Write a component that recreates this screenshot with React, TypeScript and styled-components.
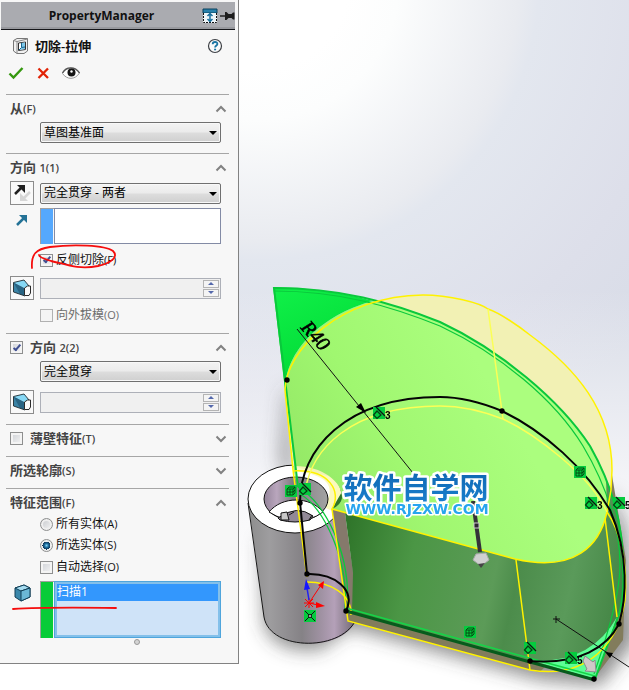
import React from "react";
import styled, { createGlobalStyle, css } from "styled-components";

const GlobalStyle = createGlobalStyle`
  *, *::before, *::after { box-sizing: border-box; }
  body {
    margin: 0;
    background: #fff;
    font-family: "Open Sans", "Noto Sans CJK SC", sans-serif;
    font-size: 12px;
    color: #111;
  }
`;

const Workspace = styled.div`
  display: flex;
  align-items: flex-start;
  min-height: 100vh;
`;

const Panel = styled.aside`
  position: relative;
  flex: 0 0 239px;
  background: #f7f7f7;
  border-right: 1px solid #828282;
  border-bottom: 1px solid #828282;
  padding: 2px 0 18px;
`;

const PanelHeader = styled.header`
  display: flex;
  align-items: center;
  height: 28px;
  margin: 0 3px 0 1px;
  background: #aaabb0;
  border-bottom: 1px solid #15161a;
  box-shadow: inset 0 -2px 0 #98999e;
`;

const PanelTitle = styled.h1`
  flex: 1;
  margin: 0;
  text-align: center;
  font-size: 12px;
  font-weight: 700;
  line-height: 20px;
`;

const PlainButton = styled.button`
  display: flex;
  padding: 0;
  border: 0;
  background: none;
`;

const FeatureRow = styled.div`
  display: flex;
  align-items: center;
  height: 32px;
  padding: 0 15px 0 12px;
  gap: 6px;
`;

const FeatureName = styled.h2`
  flex: 1;
  margin: 0;
  font-size: 13px;
  font-weight: 600;
  line-height: 20px;
`;

const ActionRow = styled.div`
  display: flex;
  align-items: center;
  height: 22px;
  margin-bottom: 10px;
  padding-left: 8px;
  gap: 12px;
`;

const Section = styled.section<{ $bottom: number }>`
  margin: 0 9px 0 6px;
  padding: 0 8px ${(p) => p.$bottom}px 4px;
  border-top: 1px solid #a6a6a6;
`;

const SectionHeader = styled.div`
  display: flex;
  align-items: center;
  height: 27px;
  gap: 7px;
  margin-right: -6px;
`;

const Latin = styled.span`
  font-size: 11px;
`;

const SectionTitle = styled.h3`
  flex: 1;
  margin: 0;
  font-size: 13px;
  font-weight: 600;
  line-height: 20px;
  color: #444;
`;

const Row = styled.div<{ $gap?: number }>`
  display: grid;
  grid-template-columns: 30px minmax(0, 1fr);
  align-items: center;
  margin-top: ${(p) => p.$gap ?? 0}px;
`;

const Field = styled.div`
  grid-column: 2;
`;

const SelectFrame = styled.div`
  position: relative;
  &::after {
    content: "";
    position: absolute;
    right: 4px;
    top: 9px;
    border: 4px solid transparent;
    border-top-color: #000;
    border-bottom: 0;
    pointer-events: none;
  }
`;

const Select = styled.select`
  display: block;
  appearance: none;
  width: 100%;
  height: 21px;
  padding: 0 16px 0 3px;
  border: 1px solid #707070;
  border-radius: 2px;
  background: linear-gradient(#f3f3f3, #ebebeb 48%, #dddddd 52%, #cfcfcf);
  box-shadow: inset 0 0 0 1px #f8f8f8;
  font: inherit;
  line-height: 18px;
  color: #000;
`;

const IconButton = styled.button`
  display: flex;
  align-items: center;
  justify-content: center;
  width: 24px;
  height: 24px;
  padding: 0;
  border: 1px solid #8c8c8c;
  background: #f9f9f9;
`;

const IconCell = styled.span`
  align-self: start;
  display: flex;
  padding: 3px 0 0 4px;
`;

const PickBox = styled.div<{ $tint: string }>`
  display: grid;
  grid-template-columns: 13px minmax(0, 1fr);
  column-gap: 1px;
  background: linear-gradient(90deg, ${(p) => p.$tint} 13px, transparent 13px);
  box-shadow: inset 1px 1px 0 #a0a0a0;
`;

const PickInput = styled.textarea`
  grid-column: 2;
  display: block;
  width: 100%;
  height: 36px;
  border: 1px solid #838ba5;
  background: #fff;
  resize: none;
  outline: none;
`;

const PickList = styled.ul`
  grid-column: 2;
  height: 57px;
  margin: 0;
  padding: 2px;
  list-style: none;
  border: 1px solid #4fa5dc;
  outline: 2px solid #84c0ea;
  outline-offset: -3px;
  background: #cfe3f8;
`;

const PickItem = styled.li`
  height: 17px;
  line-height: 15px;
  background: #3397fd;
  color: #fff;
`;

const boxStyle = css`
  appearance: none;
  flex: none;
  margin: 0;
  width: 13px;
  height: 13px;
  border: 1px solid #8e8f8f;
`;

const Check = styled.input.attrs({ type: "checkbox" })`
  ${boxStyle}
  display: grid;
  place-items: center;
  background: linear-gradient(135deg, #cdd0d5, #f6f6f6);
  box-shadow: inset 0 0 0 2px #f4f4f4;
  &:disabled { border-color: #b1b1b1; background: #f4f4f4; }
  &:checked::before {
    content: "";
    width: 4px;
    height: 8px;
    margin-bottom: 2px;
    border: solid #3f4f92;
    border-width: 0 2px 2px 0;
    transform: rotate(40deg);
  }
`;

const Radio = styled.input.attrs({ type: "radio" })`
  ${boxStyle}
  border-radius: 50%;
  background: linear-gradient(135deg, #c4c7cb, #f6f6f6);
  box-shadow: inset 0 0 0 2px #efefef;
  &:checked {
    background: radial-gradient(circle at 50% 50%, #7fd0ee 0, #1c6c9e 2px, #0d2f4d 4px, #efefef 4px);
    box-shadow: none;
  }
`;

const Option = styled.label<{ $muted?: boolean }>`
  grid-column: 2;
  display: flex;
  align-items: center;
  gap: 3px;
  height: 16px;
  line-height: 16px;
  color: ${(p) => (p.$muted ? "#6d6d6d" : "#111")};
`;

const SpinFrame = styled.div`
  display: flex;
  height: 21px;
  padding: 1px;
  border: 1px solid #adb0b8;
  background: #f0f0f0;
`;

const SpinInput = styled.input`
  flex: 1;
  min-width: 0;
  border: 0;
  background: transparent;
`;

const SpinButtons = styled.div`
  display: grid;
  grid-template-rows: 1fr 1fr;
  gap: 1px;
  width: 16px;
`;

const SpinButton = styled.button<{ $down?: boolean }>`
  display: grid;
  place-items: center;
  padding: 0;
  border: 1px solid #b4b4b4;
  background: #f4f4f4;
  &::before {
    content: "";
    border: 3px solid transparent;
    ${(p) =>
      p.$down
        ? css`border-top-color: #5468ab; border-bottom: 0;`
        : css`border-bottom-color: #5468ab; border-top: 0;`}
  }
`;

const Grip = styled.div`
  width: 6px;
  height: 6px;
  margin: 1px auto 0 124px;
  border: 1px solid #999;
  border-radius: 50%;
  background: #d4d4d4;
`;

const Markup = styled.svg`
  position: absolute;
  left: 0;
  top: 0;
  pointer-events: none;
`;

const Viewport = styled.main`
  flex: 1;
  min-width: 0;
  height: 100vh;
  background:
    linear-gradient(rgba(255, 255, 255, 0) 42%, #f8f8fa 74%, #fff 88%),
    radial-gradient(circle at 20px -20px, #fff 90px, #fcfdfd 140px, #e9ebf0 260px, #e3e7ef 280px, #dddfea 420px, #d8dce7 520px);
`;

const Scene = styled.svg`
  display: block;
  width: 100%;
  height: 100%;
`;

function Chevron({ open }: { open?: boolean }) {
  return (
    <PlainButton type="button" aria-label={open ? "收起" : "展开"}>
      <svg width="12" height="8" viewBox="0 0 12 8">
        <path d={open ? "M1.500 6.500 6 2l4.500 4.500" : "M1.500 1.500 6 6l4.500-4.500"} fill="none" stroke="#828282" strokeWidth="2" />
      </svg>
    </PlainButton>
  );
}

function DraftIcon() {
  return (
    <svg width="20" height="18" viewBox="0 0 20 18">
      <path d="M1.500 3.500 12 1l5 6-5 2z" fill="#86d8f5" />
      <path d="M1.500 3.500 12 9v7.500L1.500 13z" fill="#3b83a5" />
      <path d="M1.500 3.500 12 9v7.500L8 15z" fill="#286483" />
      <path d="M17 7 12 1 1.500 3.500V13L13 17" fill="none" stroke="#1d2a31" strokeWidth=".9" />
      <path d="m12.500 9 3-2h3v7l-1.500 2.500h-4.500z" fill="#fafafa" stroke="#2b2b2b" />
    </svg>
  );
}

function Spin({ label }: { label: string }) {
  return (
    <Field>
      <SpinFrame>
        <SpinInput aria-label={label} disabled />
        <SpinButtons>
          <SpinButton type="button" aria-label="增加" />
          <SpinButton type="button" aria-label="减少" $down />
        </SpinButtons>
      </SpinFrame>
    </Field>
  );
}

function Dropdown({ label, value }: { label: string; value: string }) {
  return (
    <Field>
      <SelectFrame>
        <Select aria-label={label} defaultValue={value}>
          <option>{value}</option>
        </Select>
      </SelectFrame>
    </Field>
  );
}

function Tangent({ x, y, n }: { x: number; y: number; n?: string }) {
  return (
    <g transform={`translate(${x} ${y})`}>
      <rect width="12" height="12" fill="#05cb3e" />
      <path d="M3 0 12 9" stroke="#111" strokeWidth="1.200" />
      <path d="m4 4 4 4-4 3.500L.500 8z" fill="#05cb3e" stroke="#063b12" strokeWidth="1.200" />
      {n && <text x="12" y="12" fontFamily="Liberation Sans" fontWeight="700" fontSize="10">{n}</text>}
    </g>
  );
}

function CubeMark({ x, y }: { x: number; y: number }) {
  return (
    <g transform={`translate(${x} ${y})`}>
      <rect width="12" height="12" fill="#05cb3e" />
      <path d="M2 4h6v6H2zM2 4l2-2h6v6l-2 2M8 4l2-2M5 4v6M2 7h6l2-2" fill="none" stroke="#06420f" strokeWidth=".9" />
    </g>
  );
}

function Model() {
  return (
    <Scene viewBox="239 0 390 690" preserveAspectRatio="xMinYMin slice" role="img" aria-label="切除-拉伸预览">
      <defs>
        <linearGradient id="body" x1="248" x2="356" y1="0" y2="0" gradientUnits="userSpaceOnUse">
          <stop offset="0" stopColor="#8d8d8d" />
          <stop offset=".2" stopColor="#9e9d9f" />
          <stop offset=".5" stopColor="#858286" />
          <stop offset=".68" stopColor="#a092a3" />
          <stop offset=".8" stopColor="#b4a0b8" />
          <stop offset="1" stopColor="#6d6670" />
        </linearGradient>
        <linearGradient id="bore" x1="264" x2="328" y1="0" y2="0" gradientUnits="userSpaceOnUse">
          <stop offset="0" stopColor="#94849a" />
          <stop offset=".2" stopColor="#b9a6bd" />
          <stop offset=".45" stopColor="#807c82" />
          <stop offset="1" stopColor="#a3a3a3" />
        </linearGradient>
        <linearGradient id="face" x1="290" x2="500" y1="520" y2="400" gradientUnits="userSpaceOnUse">
          <stop offset="0" stopColor="#91e463" />
          <stop offset=".5" stopColor="#a0f770" />
          <stop offset="1" stopColor="#abfe7e" />
        </linearGradient>
        <linearGradient id="wall" x1="345" x2="622" y1="530" y2="590" gradientUnits="userSpaceOnUse">
          <stop offset="0" stopColor="#2f752a" />
          <stop offset=".25" stopColor="#4b9645" />
          <stop offset=".55" stopColor="#5c9b58" />
          <stop offset=".63" stopColor="#4c8c4b" />
          <stop offset=".82" stopColor="#5a9a5a" />
          <stop offset="1" stopColor="#458646" />
        </linearGradient>
        <linearGradient id="sharp" x1="280" x2="320" y1="290" y2="380" gradientUnits="userSpaceOnUse">
          <stop offset="0" stopColor="#10ef48" />
          <stop offset="1" stopColor="#00da35" />
        </linearGradient>
        <linearGradient id="logo" x1="0" x2="0" y1="0" y2="1">
          <stop offset="0" stopColor="#0d62ac" />
          <stop offset="1" stopColor="#1b83d2" />
        </linearGradient>
        <filter id="soft" x="-30%" y="-30%" width="160%" height="160%">
          <feGaussianBlur stdDeviation="9" />
        </filter>
      </defs>

      <g filter="url(#soft)">
        <path d="M286 385 280 460 292 490V400z" fill="#555" opacity=".6" />
        <path d="M262 540 264 625Q275 654 320 650L350 628 540 680 600 686 636 640 626 530 612 490 600 600z" fill="#444" opacity=".6" />
      </g>

      {/* bushing */}
      <path d="M248 500 264 617C270 650 345 655 357 617L343 500z" fill="url(#body)" />
      <path d="M248 503 264 617C270 652 345 652 357 617L356 611" fill="none" stroke="#161616" />
      <ellipse cx="295" cy="499" rx="47" ry="34" fill="#fff" stroke="#111" />
      <path d="M294 466C340 465 352 498 332 511L324 507Q344 476 294 471z" fill="#fbf9bd" />
      <ellipse cx="296" cy="499" rx="32" ry="22" fill="url(#bore)" stroke="#111" />
      <path d="M269 512C282 496 310 496 323 512Q298 530 269 512z" fill="#fff" stroke="#111" />
      <path d="M278 518Q297 504 313 516L310 520Q295 524 280 520z" fill="#918896" stroke="#111" />
      <path d="m281 513 6-1 2 8h-8z" fill="#c8c8c8" stroke="#111" />
      <path d="m289 515 5-3M312 515l-3 5" stroke="#111" />

      {/* preview solid */}
      <path d="M293 466 285 390C286 350 340 296 423 295C470 295 500 315 530 335C575 368 612 410 612 470L611 500 607 512 560 500 342 480z" fill="#f2f1b4" />
      <path d="M332 509 345 513 353 573 353 612 348 620z" fill="#85796b" />
      <path d="M346 610 528 659 593 680 623 640 626 560 612 475 607 525 600 610 540 672 525 669 348 621z" fill="#827c5c" />
      <path d="M440 322C500 350 560 400 590 446C615 490 623 530 623 565Q625 600 617 620L595 679 352 612 353 573 345 513 332 509z" fill="url(#wall)" />
      <path d="M617 617 595 679 530 660Q590 665 617 617z" fill="#5cfe95" />
      <path d="M273 287 297 487 293 466C320 465 343 481 342 498Q341 505 332 509L515 559C575 573 600 545 607 512L606 478Q600 462 590 446C560 400 500 350 440 322Q410 308 373 301C330 312 286 345 285 390z" fill="url(#face)" />
      <path d="M273 287C310 288 340 292 373 301C330 312 286 345 285 390z" fill="url(#sharp)" />

      <g fill="none" stroke="#0ac83c" strokeWidth="2">
        <path d="M298 487 274 288C340 288 390 302 440 322C500 350 560 400 590 446C615 490 623 530 623 565Q625 600 617 620L595 679" />
        <path d="M274 291C340 291 390 306 440 326C500 354 555 400 583 446C608 488 620 530 620 565Q620 600 594 674" strokeWidth="1.200" />
        <path d="M298 487C326 504 352 555 347 611M300 494C324 508 349 560 345 610" strokeWidth="1.300" />
      </g>

      <g fill="none" stroke="#fff200" strokeWidth="1.500">
        <path d="M307 577 293 470 285 390C286 350 340 296 423 295C450 295 480 303 488 309C500 313 520 327 530 335C575 368 612 410 612 470L611 490 607 512" />
        <path d="M293 471C330 469 342 492 332 509L515 559C575 573 600 545 607 512" />
        <path d="M332 509 348 621 530 670C590 680 619 640 625 600C628 565 620 530 607 512" />
        <path d="M516 560 530 670M605 518 617 617" />
        <path d="M307 582C330 582 352 594 351 615" />
        <path d="M305 492C311 450 350 406 440 406C465 406 485 412 503 419C535 434 590 475 607 512M488 309 503 419" stroke="#fbff56" />
      </g>

      {/* sketch profile */}
      <path d="M346 611 595 680" stroke="#075b1c" strokeWidth="3" />
      <path d="M346 608 595 676" stroke="#15d548" strokeWidth="1.500" />
      <g fill="none" stroke="#050505" strokeWidth="2">
        <path d="M307 574 300 502C300 450 345 397 440 397C465 397 485 404 502 411C545 432 585 468 610 510C630 556 626 600 619 624C607 647 580 665 530 661" />
        <path d="M307 574C335 573 356 590 346 611" />
      </g>
      {[[287, 380], [502, 411], [300, 503], [307, 574], [346, 611], [619, 624], [530, 661], [594, 679]].map(([x, y]) => (
        <circle key={`${x}-${y}`} cx={x} cy={y} r="2.700" />
      ))}

      {/* radius dimension */}
      <path d="M297 329 413 473" stroke="#111" />
      <path d="m366 413-10-6 5-4z" />
      <text transform="translate(300 328) rotate(48)" fontFamily="Liberation Serif" fontStyle="italic" fontSize="20" stroke="#000" strokeWidth=".6">R40</text>
      <path d="M556 619 629 667M553 619h7M556 616v7" stroke="#111" />
      <path d="m605 652 8 1-3 5z" />

      {/* origin */}
      <g stroke="#f00" fill="#f00">
        <path d="M309 603 321 585M309 603 318 605M305 599l8 8M313 599l-8 8M309 598v10M304 603h10" />
        <path d="m324 581-1 8-5-4zM325 606l-9-4 0 6z" stroke="none" />
      </g>
      <path d="m309 600-2-12" stroke="#2020f0" strokeWidth="1.500" />
      <path d="m306 579 4 10-6 1z" fill="#1616ff" />
      <g transform="translate(304 610)">
        <rect width="12" height="12" fill="#05cb3e" />
        <path d="m1 1 10 10M11 1 1 11" stroke="#111" />
        <circle cx="6" cy="6" r="1.500" fill="#ddd" stroke="#111" />
      </g>

      <Tangent x={373} y={407} n="3" />
      <CubeMark x={574} y={466} />
      <Tangent x={585} y={497} n="3" />
      <Tangent x={613} y={497} n="5" />
      <CubeMark x={285} y={485} />
      <Tangent x={299} y={483} />
      <CubeMark x={464} y={626} />
      <Tangent x={524} y={642} />
      <Tangent x={565} y={652} n="5" />

      {/* drag handles */}
      <path d="m473 501 7 51" stroke="#353239" strokeWidth="4" />
      <path d="M474 523h5v5h-5z" fill="#2b2730" stroke="#ccc" />
      <path d="M473 560 476 554 486 553 489 560 481 566z" fill="#d0d0d0" stroke="#aaa" />
      <path d="m478 564 7-1-4 5z" fill="#444" />
      <path d="m585 656 8 6 2-2 1 12-11-1 2-2-4-8z" fill="#cfc8c8" stroke="#8c8c8c" />

      <g stroke="#fff" strokeWidth="5" paintOrder="stroke" strokeLinejoin="round" textAnchor="middle">
        <text x="416" y="499" fontFamily="Noto Sans CJK SC" fontSize="29" fontWeight="700" fill="url(#logo)">软件自学网</text>
        <text x="417" y="514" fontFamily="DejaVu Sans" fontSize="14" strokeWidth="3" fontWeight="700" fill="#27a5ee">WWW.RJZXW.COM</text>
      </g>
    </Scene>
  );
}

export default function App() {
  return (
    <>
      <GlobalStyle />
      <Workspace>
        <Panel>
          <PanelHeader>
            <PanelTitle>PropertyManager</PanelTitle>
            <PlainButton type="button" aria-label="展开面板">
              <svg width="16" height="16" viewBox="0 0 16 16">
                <path d="M1 1h14v4H1z" fill="#2780aa" stroke="#0b405d" />
                <path d="M1 5h14v10H1z" fill="#eef5f8" />
                <path d="M1.500 5v9.500h13V5" fill="none" stroke="#111" strokeDasharray="2 1" />
                <path d="M8 5v9M5.500 8 8 5.500 10.500 8M5.500 11 8 13.500l2.500-2.500" fill="none" stroke="#176e9c" strokeWidth="1.500" />
              </svg>
            </PlainButton>
            <PlainButton type="button" aria-label="固定">
              <svg width="17" height="12" viewBox="0 0 17 12">
                <path d="M2 6h6" stroke="#222" strokeWidth="1.500" />
                <path d="M7 2h1.500l2 2h3L15 2.500h1.500v7H15L13.500 8h-3l-2 2H7z" fill="#1d1d1d" />
              </svg>
            </PlainButton>
          </PanelHeader>

          <FeatureRow>
            <svg width="17" height="18" viewBox="0 0 17 18">
              <path d="M1.500 3.500 5 1.500h10.500V14L12 16.500H5L1.500 14z" fill="#f1f1f1" stroke="#777" />
              <path d="M1.500 3.500 5 4.500v12M5 4.500 15.500 2" fill="none" stroke="#888" />
              <path d="M6.500 6 13.500 5v7.500l-7 1z" fill="#fff" stroke="#333" />
              <path d="M9 6v5l-2 2 6-1V5.500z" fill="#7fc8ea" />
              <path d="M9.500 6v4.500l3.500-.5M9 11l-2 2" fill="none" stroke="#19658f" />
            </svg>
            <FeatureName>切除-拉伸</FeatureName>
            <PlainButton type="button" aria-label="帮助">
              <svg width="16" height="16" viewBox="0 0 16 16">
                <circle cx="8" cy="8" r="6.500" fill="#fafafa" stroke="#3d4045" strokeWidth="1.200" />
                <path d="M5.700 6.300c0-3 4.800-3 4.700-.3 0 1.500-2.300 1.600-2.300 3.500" fill="none" stroke="#1b75a3" strokeWidth="1.800" />
                <path d="M7.100 10.700h2v1.600h-2z" fill="#1b75a3" />
              </svg>
            </PlainButton>
          </FeatureRow>
          <ActionRow>
            <PlainButton type="button" aria-label="确定">
              <svg width="16" height="14" viewBox="0 0 16 14">
                <path d="M1.500 7.500 5.500 11.500 14.500 2" fill="none" stroke="#35980f" strokeWidth="2.400" />
              </svg>
            </PlainButton>
            <PlainButton type="button" aria-label="取消">
              <svg width="14" height="14" viewBox="0 0 14 14">
                <path d="m2.500 2.500 9.500 9.500M12 2.500 2.500 12" fill="none" stroke="#e12306" strokeWidth="2.300" />
              </svg>
            </PlainButton>
            <PlainButton type="button" aria-label="预览">
              <svg width="18" height="14" viewBox="0 0 18 14">
                <path d="M.500 7.500C4 1 13 0 17.500 7 13 14 5 14 .500 7.500z" fill="#fff" stroke="#999" />
                <path d="M.500 7C4 .500 13 0 17.500 7" fill="none" stroke="#555" strokeWidth="1.300" />
                <circle cx="9.500" cy="6.500" r="4" fill="#151515" />
                <circle cx="9.500" cy="5.500" r="1.200" fill="#fff" />
              </svg>
            </PlainButton>
          </ActionRow>

          <Section $bottom={10}>
            <SectionHeader>
              <SectionTitle>从<Latin>(F)</Latin></SectionTitle>
              <Chevron open />
            </SectionHeader>
            <Row><Dropdown label="从" value="草图基准面" /></Row>
          </Section>

          <Section $bottom={10}>
            <SectionHeader>
              <SectionTitle>方向 <Latin>1(1)</Latin></SectionTitle>
              <Chevron open />
            </SectionHeader>
            <Row>
              <IconButton type="button" aria-label="反向">
                <svg width="20" height="20" viewBox="0 0 20 20">
                  <path d="m3 11 6-6" stroke="#202020" strokeWidth="2.500" />
                  <path d="M5 2h8v8z" fill="#202020" />
                  <path d="m18 9-6 6" stroke="#d6d6d6" strokeWidth="2.500" />
                  <path d="M8 10v8h8z" fill="#d6d6d6" />
                </svg>
              </IconButton>
              <Dropdown label="方向 1 终止条件" value="完全贯穿 - 两者" />
            </Row>
            <Row $gap={3}>
              <IconCell>
                <svg width="16" height="16" viewBox="0 0 16 16">
                  <path d="m3 14 7-7" stroke="#247296" strokeWidth="2.500" />
                  <path d="M5 4h8v8z" fill="#247296" />
                </svg>
              </IconCell>
              <Field>
                <PickBox $tint="#55a8fd"><PickInput aria-label="拉伸方向" /></PickBox>
              </Field>
            </Row>
            <Row $gap={8}>
              <Option><Check defaultChecked /><span>反侧切除<Latin>(F)</Latin></span></Option>
            </Row>
            <Row $gap={8}>
              <IconButton type="button" aria-label="拔模开关"><DraftIcon /></IconButton>
              <Spin label="方向 1 拔模角度" />
            </Row>
            <Row $gap={7}>
              <Option $muted><Check disabled /><span>向外拔模<Latin>(O)</Latin></span></Option>
            </Row>
          </Section>

          <Section $bottom={10}>
            <SectionHeader>
              <Check defaultChecked aria-label="方向 2" />
              <SectionTitle>方向 <Latin>2(2)</Latin></SectionTitle>
              <Chevron open />
            </SectionHeader>
            <Row><Dropdown label="方向 2 终止条件" value="完全贯穿" /></Row>
            <Row $gap={8}>
              <IconButton type="button" aria-label="拔模开关"><DraftIcon /></IconButton>
              <Spin label="方向 2 拔模角度" />
            </Row>
          </Section>

          <Section $bottom={4}>
            <SectionHeader>
              <Check aria-label="薄壁特征" />
              <SectionTitle>薄壁特征<Latin>(T)</Latin></SectionTitle>
              <Chevron />
            </SectionHeader>
          </Section>

          <Section $bottom={4}>
            <SectionHeader>
              <SectionTitle>所选轮廓<Latin>(S)</Latin></SectionTitle>
              <Chevron />
            </SectionHeader>
          </Section>

          <Section $bottom={0}>
            <SectionHeader>
              <SectionTitle>特征范围<Latin>(F)</Latin></SectionTitle>
              <Chevron open />
            </SectionHeader>
            <Row>
              <Option><Radio name="scope" /><span>所有实体<Latin>(A)</Latin></span></Option>
            </Row>
            <Row $gap={5}>
              <Option><Radio name="scope" defaultChecked /><span>所选实体<Latin>(S)</Latin></span></Option>
            </Row>
            <Row $gap={6}>
              <Option><Check /><span>自动选择<Latin>(O)</Latin></span></Option>
            </Row>
            <Row $gap={6}>
              <IconCell>
                <svg width="17" height="18" viewBox="0 0 17 18">
                  <path d="m1 4 9-3 6 3v9l-9 4-6-4z" fill="#3a87aa" stroke="#123f57" />
                  <path d="m1 4 9-3 6 3-9 3z" fill="#a5dcf1" stroke="#123f57" />
                  <path d="m7 7 9-3v9l-9 4z" fill="#6bb7d5" stroke="#123f57" />
                </svg>
              </IconCell>
              <Field>
                <PickBox $tint="#08cc38">
                  <PickList><PickItem>扫描1</PickItem></PickList>
                </PickBox>
              </Field>
            </Row>
            <Grip />
          </Section>

          <Markup width="130" height="620" viewBox="0 0 130 620" fill="none" stroke="#f50d0d" strokeWidth="1.800" strokeLinecap="round">
            <path d="M32 268C31 254 36 249 50 247C73 244 105 245 113 251C119 257 111 263 98 266C78 270 65 264 51 261C44 259 39 257 39 255" />
            <path d="M13 609Q45 607 116 608" />
          </Markup>
        </Panel>
        <Viewport><Model /></Viewport>
      </Workspace>
    </>
  );
}
